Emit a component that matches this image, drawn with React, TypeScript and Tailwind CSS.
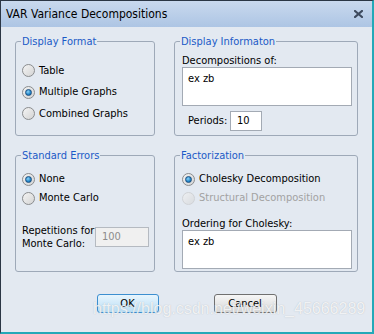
import React from "react";

const font = { fontFamily: "'DejaVu Sans Condensed', 'Liberation Sans', sans-serif" };

const Radio: React.FC<{ label: string; checked?: boolean; disabled?: boolean; className?: string }> = ({
  label,
  checked,
  disabled,
  className,
}) => (
  <div className={`flex items-center gap-[4px] ${className ?? ""}`}>
    <span
      className={`flex h-[13px] w-[13px] items-center justify-center rounded-full border bg-gradient-to-br from-[#f4f4f4] to-[#d4d4d4] ${
        disabled ? "border-[#c4c4c4] opacity-60" : "border-[#8a8c8e]"
      }`}
    >
      {checked && (
        <span className="h-[7px] w-[7px] rounded-full border border-[#1d4f80] bg-[radial-gradient(circle_at_40%_35%,#8fd4f8,#1f84c8_60%,#0f5a96)]" />
      )}
    </span>
    <span className={disabled ? "text-[#a2a2a2]" : "text-black"}>{label}</span>
  </div>
);

const Group: React.FC<{ title: string; className?: string; children: React.ReactNode }> = ({
  title,
  className,
  children,
}) => (
  <fieldset className={`rounded-[3px] border border-[#9ea9b8] ${className ?? ""}`}>
    <legend className="ml-[5px] px-[1px] leading-[13px] text-[#1b5ac7]">{title}</legend>
    {children}
  </fieldset>
);

export default function App() {
  return (
    <div
      style={font}
      className="relative flex h-[334px] w-[374px] flex-col overflow-hidden border-l border-t border-[#2b3645] border-b-[2px] border-r-[2px] border-b-[#23a9b8] border-r-[#23a9b8] bg-[#e3e9f1] text-[11px] text-black"
    >
      {/* title bar */}
      <div className="flex h-[26px] items-center justify-between bg-gradient-to-b from-[#c9d9ee] to-[#adc5e4] pl-[5px] pr-[9px]">
        <span className="text-[12px] text-black">VAR Variance Decompositions</span>
        <svg width="9" height="8" viewBox="0 0 9 8">
          <path d="M1 1 L8 7 M8 1 L1 7" stroke="#3d4a5e" strokeWidth="2.2" strokeLinecap="square" />
        </svg>
      </div>

      <div className="flex flex-1 flex-col px-[14px] pt-[8px]">
        <div className="grid grid-cols-[140px_184px] gap-x-[19px] gap-y-[13px]">
          <Group title="Display Format" className="h-[101px]">
            <div className="flex flex-col pl-[6px] pt-[12px]">
              <Radio label="Table" className="h-[21.5px]" />
              <Radio label="Multiple Graphs" checked className="h-[21.5px]" />
              <Radio label="Combined Graphs" className="h-[21.5px]" />
            </div>
          </Group>

          <Group title="Display Informaton" className="h-[101px]">
            <div className="flex flex-col pl-[7px] pt-[6px]">
              <span className="leading-[13px]">Decompositions of:</span>
              <div className="h-[39px] w-[170px] border border-[#a3aab4] bg-white px-[5px] pt-[3px]">ex zb</div>
              <div className="mt-[5px] flex items-center">
                <span className="ml-[6px] w-[42px]">Periods:</span>
                <div className="flex h-[20px] w-[32px] items-center border border-[#a3aab4] bg-white px-[6px]">10</div>
              </div>
            </div>
          </Group>

          <Group title="Standard Errors" className="h-[123px]">
            <div className="flex flex-col pl-[6px] pt-[8px]">
              <Radio label="None" checked className="h-[19px]" />
              <Radio label="Monte Carlo" className="h-[19px]" />
              <div className="mt-[16px] flex items-center">
                <div className="flex w-[73px] flex-col leading-[13px]">
                  <span>Repetitions for</span>
                  <span>Monte Carlo:</span>
                </div>
                <div className="flex h-[20px] w-[54px] items-center border border-[#b5bac1] bg-[#f0f0f0] px-[6px] text-[#8c8c8c]">
                  100
                </div>
              </div>
            </div>
          </Group>

          <Group title="Factorization" className="h-[123px]">
            <div className="flex flex-col pl-[7px] pt-[8px]">
              <Radio label="Cholesky Decomposition" checked className="h-[19px]" />
              <Radio label="Structural Decomposition" disabled className="h-[18px]" />
              <span className="mt-[10px] leading-[13px]">Ordering for Cholesky:</span>
              <div className="h-[39px] w-[170px] border border-[#a3aab4] bg-white px-[5px] pt-[3px]">ex zb</div>
            </div>
          </Group>
        </div>

        <div className="mt-[22px] flex justify-center gap-[55px]">
          <button className="h-[19px] w-[62px] rounded-[3px] border border-[#3c8fd0] bg-gradient-to-b from-[#e8f5fd] to-[#b9def5] leading-none text-black">
            OK
          </button>
          <button className="h-[19px] w-[63px] rounded-[3px] border border-[#707070] bg-gradient-to-b from-[#f6f6f6] to-[#d8d8d8] leading-none text-black">
            Cancel
          </button>
        </div>
      </div>

      {/* watermark */}
      <span
        className="pointer-events-none absolute left-[92px] top-[299px] whitespace-nowrap text-[16px] leading-[18px] text-white/80 [text-shadow:0_0_1px_rgba(120,130,140,0.5)]"
        style={{ fontFamily: "'Liberation Sans', sans-serif" }}
      >
        https://blog.csdn.net/weixin_45666289
      </span>
    </div>
  );
}
